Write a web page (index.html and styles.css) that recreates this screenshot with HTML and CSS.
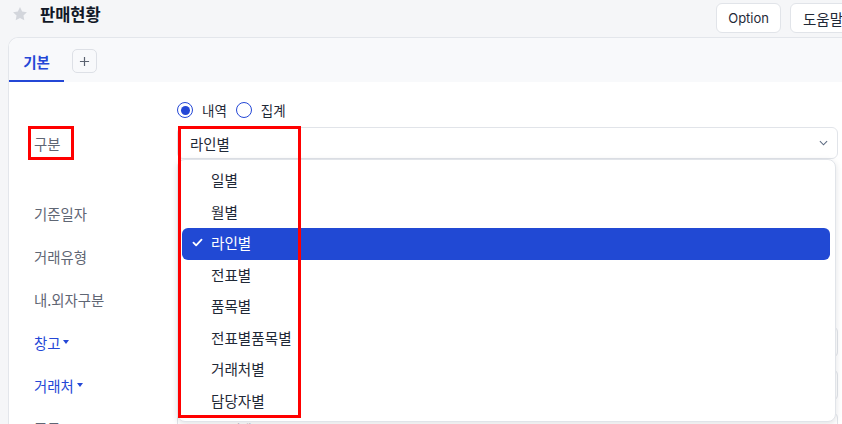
FILE: index.html
```html
<!DOCTYPE html>
<html lang="ko">
<head>
<meta charset="utf-8">
<title>판매현황</title>
<link rel="stylesheet" href="styles.css">
</head>
<body>
<div class="app">
  <header class="topbar">
    <svg class="star" viewBox="0 0 24 24" aria-hidden="true"><path d="M12 1.6l3.2 6.6 7.2 1-5.2 5.1 1.25 7.2L12 18.1l-6.45 3.4 1.25-7.2L1.6 9.2l7.2-1z"/></svg>
    <h1 class="title">판매현황</h1>
    <div class="actions">
      <button class="btn">Option</button>
      <button class="btn btn-ko">도움말</button>
    </div>
  </header>

  <section class="card">
    <nav class="tabs">
      <div class="tab active">기본</div>
      <button class="tab-add" aria-label="탭 추가">
        <svg viewBox="0 0 12 12"><path d="M6 1v10M1 6h10"/></svg>
      </button>
    </nav>

    <div class="form">
      <div class="row row-radio">
        <div class="label"></div>
        <div class="control radios">
          <label class="radio-item"><span class="radio checked"></span>내역</label>
          <label class="radio-item"><span class="radio"></span>집계</label>
        </div>
      </div>

      <div class="row row-select">
        <div class="label">구분</div>
        <div class="control select-wrap">
          <div class="select">
            <span>라인별</span>
            <svg class="chevron" viewBox="0 0 10 6"><path d="M1 1l4 4 4-4"/></svg>
          </div>
          <ul class="dropdown">
            <li class="option">일별</li>
            <li class="option">월별</li>
            <li class="option selected">
              <svg class="check" viewBox="0 0 12 10"><path d="M1.5 5.2l3 3 6-6.4"/></svg>라인별
            </li>
            <li class="option">전표별</li>
            <li class="option">품목별</li>
            <li class="option">전표별품목별</li>
            <li class="option">거래처별</li>
            <li class="option">담당자별</li>
          </ul>
        </div>
      </div>

      <div class="row row-first">
        <div class="label">기준일자</div>
        <div class="control"><div class="input short"></div></div>
      </div>
      <div class="row">
        <div class="label">거래유형</div>
        <div class="control"><div class="input short"></div></div>
      </div>
      <div class="row">
        <div class="label">내.외자구분</div>
        <div class="control"><div class="input short"></div></div>
      </div>
      <div class="row">
        <div class="label link">창고<span class="caret"></span></div>
        <div class="control"><div class="input"></div></div>
      </div>
      <div class="row">
        <div class="label link">거래처<span class="caret"></span></div>
        <div class="control"><div class="input"></div></div>
      </div>
      <div class="row">
        <div class="label">품목</div>
        <div class="control"><div class="input"><span class="placeholder">품목코드 검색</span></div></div>
      </div>
    </div>
  </section>
</div>

<div class="mark mark-label"></div>
<div class="mark mark-list"></div>
</body>
</html>
```

FILE: styles.css
```css
html, body {
  margin: 0;
  height: 424px;
  overflow: hidden;
}

body {
  background: #f5f6f8;
  font-family: Inter, "Noto Sans CJK KR", "Noto Sans", sans-serif;
  color: #1f2937;
}

.app {
  width: 866px;
}

/* ---------- top bar ---------- */
.topbar {
  height: 37px;
  display: flex;
  align-items: flex-start;
  padding: 0 10px 0 12px;
  box-sizing: border-box;
}

.star {
  width: 16px;
  height: 16px;
  margin-top: 6px;
  fill: #d3d6dc;
  flex-shrink: 0;
}

.title {
  margin: 3px 0 0 12px;
  font-size: 16.5px;
  line-height: 22px;
  font-weight: 700;
  color: #111827;
  font-family: "Noto Sans CJK KR", sans-serif;
}

.actions {
  margin-left: auto;
  margin-top: 3px;
  display: flex;
  gap: 9px;
}

.btn {
  height: 30px;
  padding: 0 11px;
  border: 1px solid #e1e4e9;
  border-radius: 6px;
  background: #ffffff;
  font-family: Inter, "Noto Sans CJK KR", sans-serif;
  font-size: 13px;
  color: #1f2937;
  flex-shrink: 0;
}

.btn-ko {
  padding: 0 12px;
  font-family: "Noto Sans CJK KR", sans-serif;
  font-size: 14.5px;
}

/* ---------- card ---------- */
.card {
  margin-left: 8px;
  border: 1px solid #e3e6eb;
  border-right: none;
  border-bottom: none;
  border-top-left-radius: 10px;
  background: #ffffff;
  overflow: hidden;
  height: 400px;
}

.tabs {
  height: 44px;
  display: flex;
  align-items: center;
  background: #f8f9fb;
}

.tab {
  width: 55px;
  height: 44px;
  box-sizing: border-box;
  padding-top: 4px;
  display: flex;
  align-items: center;
  justify-content: center;
  font-size: 14.5px;
  font-weight: 600;
  font-family: "Noto Sans CJK KR", sans-serif;
}

.tab.active {
  color: #2447d6;
  border-bottom: 2px solid #2447d6;
}

.tab-add {
  margin: 2px 0 0 8px;
  width: 25px;
  height: 24px;
  padding: 0;
  border: 1px solid #dde0e6;
  border-radius: 5px;
  background: #f8f9fb;
  display: flex;
  align-items: center;
  justify-content: center;
}

.tab-add svg {
  width: 11px;
  height: 11px;
  stroke: #5b6270;
  stroke-width: 1.3;
  fill: none;
}

/* ---------- form ---------- */
.form {
  padding: 17px 28px 0 25px;
  display: flex;
  flex-direction: column;
  font-family: "Noto Sans CJK KR", sans-serif;
  font-size: 14.4px;
}

.row {
  display: grid;
  grid-template-columns: 143px 1fr;
  align-items: center;
  margin-top: 11px;
  min-height: 32px;
}

.row-radio {
  margin-top: 0;
  min-height: 22px;
  height: 22px;
}

.row-select {
  margin-top: 6px;
}

.row-first {
  margin-top: 38px;
}

.label {
  color: #5f6674;
  display: flex;
  align-items: center;
}

.label.link {
  color: #2447d6;
}

.caret {
  width: 0;
  height: 0;
  margin-left: 3px;
  border-left: 3.5px solid transparent;
  border-right: 3.5px solid transparent;
  border-top: 4px solid #2447d6;
}

/* radios */
.radios {
  display: flex;
  align-items: center;
  gap: 9px;
  font-size: 13.5px;
}

.radio-item {
  display: flex;
  align-items: center;
  gap: 9px;
  color: #1f2937;
}

.radio {
  width: 16px;
  height: 16px;
  box-sizing: border-box;
  border: 1.5px solid #2447d6;
  border-radius: 50%;
  display: flex;
  align-items: center;
  justify-content: center;
}

.radio.checked::after {
  content: "";
  width: 9px;
  height: 9px;
  border-radius: 50%;
  background: #2447d6;
}

/* select */
.select-wrap {
  position: relative;
}

.select {
  height: 32px;
  box-sizing: border-box;
  border: 1px solid #e1e4e9;
  border-radius: 6px;
  padding: 0 9px 0 12px;
  display: flex;
  align-items: center;
  justify-content: space-between;
  background: #ffffff;
  color: #1f2937;
}

.chevron {
  width: 9px;
  height: 6px;
  fill: none;
  stroke: #5d6b82;
  stroke-width: 1.2;
}

.dropdown {
  position: absolute;
  top: 32px;
  left: 0;
  right: 2px;
  z-index: 10;
  margin: 0;
  padding: 5px 5px 4px 4px;
  list-style: none;
  background: #ffffff;
  border: 1px solid #e1e4e9;
  border-radius: 8px;
  box-shadow: 0 2px 6px rgba(15, 23, 42, 0.12);
}

.option {
  position: relative;
  height: 31.5px;
  box-sizing: border-box;
  padding: 0 0 2px 29px;
  display: flex;
  align-items: center;
  border-radius: 6px;
  color: #1f2937;
  font-size: 14.6px;
}

.option.selected {
  background: #2149d4;
  color: #ffffff;
}

.check {
  position: absolute;
  left: 10px;
  top: 10px;
  width: 11px;
  height: 9px;
  fill: none;
  stroke: #ffffff;
  stroke-width: 2;
  stroke-linecap: round;
  stroke-linejoin: round;
}

/* inputs behind the list */
.input {
  height: 32px;
  box-sizing: border-box;
  border: 1px solid #e1e4e9;
  border-radius: 6px;
  background: #ffffff;
  display: flex;
  align-items: center;
  padding-left: 4px;
}

.input.short {
  width: 300px;
}

.placeholder {
  color: #a3a8b3;
  font-size: 12px;
}

/* ---------- annotation marks ---------- */
.mark {
  position: absolute;
  box-sizing: border-box;
  border: 3px solid #ff0000;
  pointer-events: none;
  z-index: 20;
}

.mark-label {
  left: 28px;
  top: 126px;
  width: 46px;
  height: 34px;
}

.mark-list {
  left: 178px;
  top: 126px;
  width: 123px;
  height: 292px;
}
```
